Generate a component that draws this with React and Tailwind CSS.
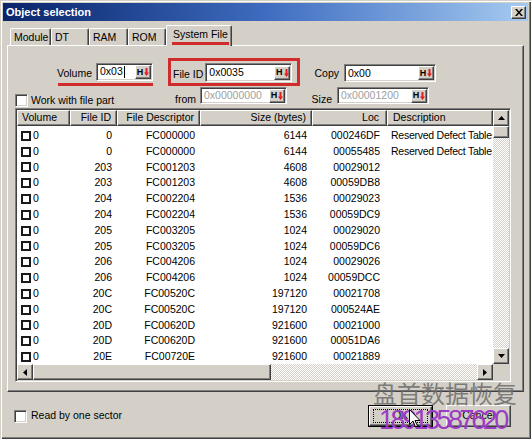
import React from 'react';

const raised =
  'bg-[#d4d0c8] border border-t-white border-l-white border-r-[#404040] border-b-[#404040] shadow-[inset_-1px_-1px_0_#808080]';
const sunken =
  'border border-t-[#808080] border-l-[#808080] border-r-white border-b-white shadow-[inset_1px_1px_0_#404040,inset_-1px_-1px_0_#d4d0c8]';
const dither =
  'bg-[image:repeating-conic-gradient(#ffffff_0_25%,#d4d0c8_0_50%)] bg-[length:2px_2px]';

const rows = [
  ['0', 'FC000000', '6144', '000246DF', 'Reserved Defect Table'],
  ['0', 'FC000000', '6144', '00055485', 'Reserved Defect Table'],
  ['203', 'FC001203', '4608', '00029012', ''],
  ['203', 'FC001203', '4608', '00059DB8', ''],
  ['204', 'FC002204', '1536', '00029023', ''],
  ['204', 'FC002204', '1536', '00059DC9', ''],
  ['205', 'FC003205', '1024', '00029020', ''],
  ['205', 'FC003205', '1024', '00059DC6', ''],
  ['206', 'FC004206', '1024', '00029026', ''],
  ['206', 'FC004206', '1024', '00059DCC', ''],
  ['20C', 'FC00520C', '197120', '00021708', ''],
  ['20C', 'FC00520C', '197120', '000524AE', ''],
  ['20D', 'FC00620D', '921600', '00021000', ''],
  ['20D', 'FC00620D', '921600', '00051DA6', ''],
  ['20E', 'FC00720E', '921600', '00021889', ''],
];

function HexBtn() {
  return (
    <div className={`${raised} w-[16px] h-[14px] shrink-0 flex items-center justify-center gap-[1px]`}>
      <span className="text-[9px] font-bold leading-none text-black">H</span>
      <svg width="5" height="8" viewBox="0 0 5 8">
        <path d="M1.5 0h2v4.5H5L2.5 8 0 4.5h1.5z" fill="#e02020" />
      </svg>
    </div>
  );
}

function Field({ value, w, h, disabled, caret }) {
  return (
    <div className={`${sunken} ${w} ${h} bg-white shrink-0 flex items-center justify-between pl-[3px] pr-[1px]`}>
      <span className={`leading-none ${disabled ? 'text-[#a0a0a0]' : 'text-black'}`}>
        {value}
        {caret && <span className="inline-block w-[1px] h-[12px] bg-black align-middle ml-[1px]" />}
      </span>
      <HexBtn />
    </div>
  );
}

function Check() {
  return <div className={`${sunken} bg-white shrink-0 w-[13px] h-[13px]`} />;
}

function Arrow({ dir }) {
  const pts = {
    up: '0,4 3.5,0 7,4',
    down: '0,0 7,0 3.5,4',
    left: '4,0 4,7 0,3.5',
    right: '0,0 0,7 4,3.5',
  }[dir];
  const vertical = dir === 'up' || dir === 'down';
  return (
    <div className={`${raised} w-[16px] h-[16px] shrink-0 flex items-center justify-center`}>
      <svg width={vertical ? 7 : 4} height={vertical ? 4 : 7}>
        <polygon points={pts} fill="#000" />
      </svg>
    </div>
  );
}

const cols = [
  { label: 'Volume', w: 'w-[53px]', head: 'justify-start pl-[4px]' },
  { label: 'File ID', w: 'w-[47px]', head: 'justify-end pr-[5px]' },
  { label: 'File Descriptor', w: 'w-[83px]', head: 'justify-end pr-[5px]' },
  { label: 'Size (bytes)', w: 'w-[112px]', head: 'justify-end pr-[5px]' },
  { label: 'Loc', w: 'w-[75px]', head: 'justify-end pr-[7px]' },
  { label: 'Description', w: 'w-[106px]', head: 'justify-start pl-[5px]' },
];

export default function App() {
  const tabs = [
    { t: 'Module', w: 'w-[41px]' },
    { t: 'DT', w: 'w-[38px]' },
    { t: 'RAM', w: 'w-[39px]' },
    { t: 'ROM', w: 'w-[38px]' },
  ];

  return (
    <div className="relative w-[531px] h-[439px] overflow-hidden whitespace-nowrap bg-[#d4d0c8] text-[10.5px] text-black font-['Liberation_Sans',Arial,sans-serif] shadow-[inset_1px_1px_0_#d4d0c8,inset_2px_2px_0_#fff,inset_-1px_-1px_0_#404040,inset_-2px_-2px_0_#808080]">
      {/* title bar */}
      <div className="mx-[3px] mt-[3px] h-[18px] bg-linear-to-r from-[#0a246a] via-[#3f6cc0] to-[#a6caf0] flex items-center justify-between pl-[3px] pr-[2px]">
        <span className="text-white font-bold text-[11px]">Object selection</span>
        <div className={`${raised} w-[15px] h-[13px] flex items-center justify-center`}>
          <svg width="8" height="7" viewBox="0 0 8 7">
            <path d="M0 0h2l2 2.5L6 0h2L5 3.5 8 7H6L4 4.5 2 7H0l3-3.5z" fill="#000" />
          </svg>
        </div>
      </div>

      {/* tabs */}
      <div className="mt-[4px] ml-[10px] h-[20px] flex items-end relative z-10">
        {tabs.map((tab) => (
          <div
            key={tab.t}
            className={`${tab.w} h-[17px] border-t border-l border-white border-r border-r-[#404040] shadow-[inset_-1px_0_0_#808080] rounded-t-[2px] pl-[3px] pt-[2px] leading-[13px]`}
          >
            {tab.t}
          </div>
        ))}
        <div className="w-[66px] h-[21px] -mb-[1px] bg-[#d4d0c8] border-t border-l border-white border-r border-r-[#404040] shadow-[inset_-1px_0_0_#808080] rounded-t-[2px] pl-[5px] pt-[2px] leading-[13px]">
          <span className="inline-block border-b-[3px] border-[#d02c2c] pb-[1px] px-[1px]">System File</span>
        </div>
      </div>

      {/* tab panel */}
      <div className="mx-[7px] h-[347px] border-t border-l border-white border-r border-b border-r-[#404040] border-b-[#404040] shadow-[inset_-1px_-1px_0_#808080] pt-[12px]">
        {/* row 1 */}
        <div className="flex items-start h-[28px]">
          <div className="ml-[50px] w-[95px] h-[28px] flex items-end justify-end gap-[4px] border-b-[3px] border-[#d02c2c] pb-[2px]">
            <span className="mb-[-1px]">Volume</span>
            <Field value="0x03" w="w-[57px]" h="h-[18px]" caret />
          </div>
          <div className="ml-[15px] w-[132px] h-[28px] border-[3px] border-[#d02c2c] flex items-end gap-[2px] pl-[2px] pb-[1px]">
            <span className="mb-[-1px]">File ID</span>
            <Field value="0x0035" w="w-[87px]" h="h-[19px]" />
          </div>
          <div className="w-[44px] h-[23px] flex items-end justify-end pr-[5px]">
            <span className="mb-[-1px]">Copy</span>
          </div>
          <div className="mt-[6px]">
            <Field value="0x00" w="w-[92px]" h="h-[18px]" />
          </div>
        </div>

        {/* row 2 */}
        <div className="mt-[1px] h-[17px] flex items-start">
          <div className="ml-[7px] w-[185px] flex items-start justify-between">
            <div className="flex items-center gap-[3px] mt-[6px]">
              <Check />
              <span>Work with file part</span>
            </div>
            <span className="mt-[5px] mr-[4px]">from</span>
          </div>
          <Field value="0x00000000" w="w-[87px]" h="h-[17px]" disabled />
          <div className="w-[50px] flex justify-end pr-[5px] mt-[5px]">
            <span>Size</span>
          </div>
          <Field value="0x00001200" w="w-[92px]" h="h-[17px]" disabled />
        </div>

        {/* list view */}
        <div className={`${sunken} mt-[4px] ml-[7px] w-[496px] h-[274px] bg-white flex flex-col p-[1px]`}>
          <div className="flex h-[254px]">
            <div className="w-[476px] overflow-hidden">
              <div className="flex h-[16px]">
                {cols.map((c) => (
                  <div key={c.label} className={`${raised} ${c.w} ${c.head} h-[16px] shrink-0 flex items-center`}>
                    {c.label}
                  </div>
                ))}
              </div>
              <div className="pt-[2px]">
                {rows.map((r, i) => (
                  <div key={i} className="flex h-[15.8px] items-center">
                    <div className="w-[53px] shrink-0 flex items-center pl-[4px] gap-[2px]">
                      <div className="w-[10px] h-[10px] border-2 border-[#1a1a1a] bg-white" />
                      <span>0</span>
                    </div>
                    <div className="w-[47px] shrink-0 text-right pr-[5px]">{r[0]}</div>
                    <div className="w-[83px] shrink-0 text-right pr-[5px]">{r[1]}</div>
                    <div className="w-[112px] shrink-0 text-right pr-[5px]">{r[2]}</div>
                    <div className="w-[75px] shrink-0 text-right pr-[7px]">{r[3]}</div>
                    <div className="w-[106px] shrink-0 pl-[4px] tracking-[-0.25px]">{r[4]}</div>
                  </div>
                ))}
              </div>
            </div>
            <div className="w-[16px] flex flex-col">
              <Arrow dir="up" />
              <div className={`${raised} w-[16px] h-[12px]`} />
              <div className={`flex-1 ${dither}`} />
              <Arrow dir="down" />
            </div>
          </div>
          <div className="flex h-[16px]">
            <Arrow dir="left" />
            <div className={`${raised} w-[238px] h-[16px]`} />
            <div className={`flex-1 ${dither}`} />
            <Arrow dir="right" />
            <div className="w-[16px] h-[16px] bg-[#d4d0c8]" />
          </div>
        </div>
      </div>

      {/* bottom */}
      <div className="mt-[13px] h-[22px] flex items-center">
        <div className="ml-[14px] w-[354px] flex items-center gap-[4px]">
          <Check />
          <span>Read by one sector</span>
        </div>
        <div className="w-[65px] h-[22px] border border-black">
          <div className={`${raised} w-full h-full flex items-center justify-center`}>
            <div className="w-[55px] h-[14px] border border-dotted border-black flex items-center justify-center">OK</div>
          </div>
        </div>
        <div className={`${raised} ml-[13px] w-[65px] h-[22px] flex items-center justify-center`}>Cancel</div>
      </div>

      {/* watermark */}
      <div className="absolute left-[373px] top-[381px] text-[24px] leading-none text-[#6c6c6c]/85 font-['Noto_Sans_CJK_SC',sans-serif] pointer-events-none">
        盘首数据恢复
      </div>
      <div className="absolute left-[379px] top-[407px] text-[27px] leading-none tracking-[-3.5px] text-[#9b3cc4] font-['Liberation_Sans',Arial,sans-serif] pointer-events-none">
        18913587620
      </div>
      <svg className="absolute left-[409px] top-[409px] pointer-events-none" width="12" height="19" viewBox="0 0 12 19">
        <path d="M0.5 0.5v15l3.5-3.5 2.5 6 2-1-2.5-5.5h5z" fill="#fff" stroke="#000" />
      </svg>
    </div>
  );
}
